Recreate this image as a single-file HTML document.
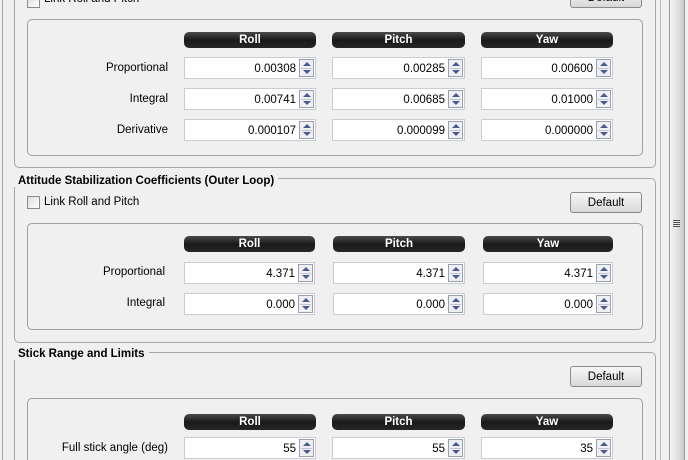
<!DOCTYPE html><html style="overflow:hidden;height:460px"><head><meta charset="utf-8"><style>
*{box-sizing:border-box}
html,body{overflow:hidden}
body{margin:0;width:688px;height:460px;background:#f0f0f0;font-family:"Liberation Sans",sans-serif;font-size:11.5px;color:#000;position:relative}
.a{position:absolute}
.gb{position:absolute;border:1px solid #a8a8a8;border-radius:5px}
.in{position:absolute;border:1px solid #a0a0a0;border-radius:5px}
.tt{position:absolute;background:#f0f0f0;font-weight:bold;padding:0 4px;font-size:11.5px}
.h{position:absolute;height:16px;border-radius:5px;background:linear-gradient(#4a4a4a,#1a1a1a 50%,#262626);color:#fff;font-weight:bold;text-align:center;line-height:17px;font-size:11.5px}
.f{position:absolute;height:22px;background:#fff;border:1px solid #c8ccd4;text-align:right;padding-right:19px;line-height:22px;font-size:11.5px}
.f i{position:absolute;right:1px;top:1px;width:15px;height:18px;border:1px solid #9aa0b0;background:#eef0f4}
.f i:before{content:"";position:absolute;left:3px;top:2px;border:4px solid transparent;border-top:0;border-bottom:4px solid #4a5a90}
.f i:after{content:"";position:absolute;left:3px;top:10px;border:4px solid transparent;border-bottom:0;border-top:4px solid #4a5a90}
.f i b{position:absolute;left:1px;right:1px;top:8px;height:1px;background:#c0c4cc}
.l{position:absolute;text-align:right;width:140px;font-size:11.5px}
.btn{position:absolute;width:72px;height:21px;border:1px solid #8a8a8a;border-radius:3px;background:linear-gradient(#f6f6f6,#e8e8e8 50%,#d8d8d8);text-align:center;line-height:20px;font-size:11.5px}
.cb{position:absolute;width:13px;height:13px;border:1px solid #8a8a8a;background:linear-gradient(135deg,#ddd,#fff)}
</style></head><body>
<div class="a" style="left:2px;top:0;width:1px;height:460px;background:#a8a8a8"></div>
<div class="a" style="left:660px;top:0;width:1px;height:460px;background:#b8b8b8"></div>
<div class="a" style="left:669px;top:0;width:16px;height:460px;border-left:1px solid #9a9a9a;border-right:1px solid #9a9a9a;background:linear-gradient(90deg,#f4f4f4,#e0e0e0 60%,#c8c8c8)"></div>
<div class="a" style="left:673px;top:220px;width:7px;height:1px;background:#555;box-shadow:0 2px #555,0 4px #555,0 6px #555"></div>

<div class="gb" style="left:14px;top:-20px;width:642px;height:188px"></div>
<div class="cb" style="left:27px;top:-5px"></div>
<div class="a" style="left:44px;top:-7px">Link Roll and Pitch</div>
<div class="btn" style="left:570px;top:-13px">Default</div>
<div class="in" style="left:27px;top:19px;width:616px;height:137px"></div>
<div class="h" style="left:184px;top:32px;width:132px">Roll</div>
<div class="h" style="left:332px;top:32px;width:133px">Pitch</div>
<div class="h" style="left:481px;top:32px;width:132px">Yaw</div>
<div class="l" style="left:28px;top:62px">Proportional</div>
<div class="l" style="left:28px;top:93px">Integral</div>
<div class="l" style="left:28px;top:124px">Derivative</div>
<div class="f" style="left:184px;top:57px;width:132px">0.00308<i><b></b></i></div>
<div class="f" style="left:332px;top:57px;width:133px">0.00285<i><b></b></i></div>
<div class="f" style="left:481px;top:57px;width:132px">0.00600<i><b></b></i></div>
<div class="f" style="left:184px;top:88px;width:132px">0.00741<i><b></b></i></div>
<div class="f" style="left:332px;top:88px;width:133px">0.00685<i><b></b></i></div>
<div class="f" style="left:481px;top:88px;width:132px">0.01000<i><b></b></i></div>
<div class="f" style="left:184px;top:119px;width:132px">0.000107<i><b></b></i></div>
<div class="f" style="left:332px;top:119px;width:133px">0.000099<i><b></b></i></div>
<div class="f" style="left:481px;top:119px;width:132px">0.000000<i><b></b></i></div>

<div class="gb" style="left:14px;top:178px;width:642px;height:165px"></div>
<div class="tt" style="left:14px;top:175px">Attitude Stabilization Coefficients (Outer Loop)</div>
<div class="cb" style="left:27px;top:196px"></div>
<div class="a" style="left:44px;top:196px">Link Roll and Pitch</div>
<div class="btn" style="left:570px;top:192px">Default</div>
<div class="in" style="left:27px;top:223px;width:616px;height:107px"></div>
<div class="h" style="left:184px;top:236px;width:131px">Roll</div>
<div class="h" style="left:333px;top:236px;width:132px">Pitch</div>
<div class="h" style="left:483px;top:236px;width:130px">Yaw</div>
<div class="l" style="left:25px;top:266px">Proportional</div>
<div class="l" style="left:25px;top:297px">Integral</div>
<div class="f" style="left:184px;top:262px;width:131px">4.371<i><b></b></i></div>
<div class="f" style="left:333px;top:262px;width:132px">4.371<i><b></b></i></div>
<div class="f" style="left:483px;top:262px;width:130px">4.371<i><b></b></i></div>
<div class="f" style="left:184px;top:293px;width:131px">0.000<i><b></b></i></div>
<div class="f" style="left:333px;top:293px;width:132px">0.000<i><b></b></i></div>
<div class="f" style="left:483px;top:293px;width:130px">0.000<i><b></b></i></div>

<div class="gb" style="left:14px;top:352px;width:642px;height:140px"></div>
<div class="tt" style="left:14px;top:348px">Stick Range and Limits</div>
<div class="btn" style="left:570px;top:366px">Default</div>
<div class="in" style="left:27px;top:398px;width:616px;height:100px"></div>
<div class="h" style="left:184px;top:414px;width:132px">Roll</div>
<div class="h" style="left:332px;top:414px;width:133px">Pitch</div>
<div class="h" style="left:481px;top:414px;width:132px">Yaw</div>
<div class="l" style="left:28px;top:442px">Full stick angle (deg)</div>
<div class="f" style="left:184px;top:437px;width:132px">55<i><b></b></i></div>
<div class="f" style="left:332px;top:437px;width:133px">55<i><b></b></i></div>
<div class="f" style="left:481px;top:437px;width:132px">35<i><b></b></i></div>
</body></html>
